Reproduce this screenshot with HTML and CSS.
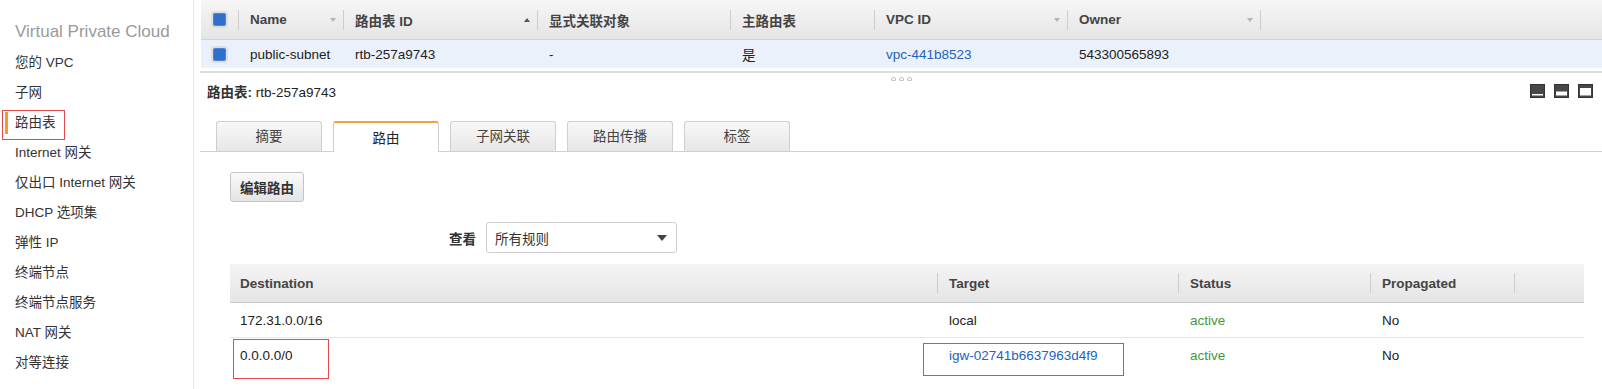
FILE: index.html
```html
<!DOCTYPE html>
<html>
<head>
  <meta http-equiv="content-type" content="text/html; charset=UTF-8">
  <title>路由表</title>
  <link rel="stylesheet" href="styles.css">
</head>
<body>
<div class="page">
    <aside class="side">
        <div class="side-title">Virtual Private Cloud</div>
        <ul class="nav">
            <li>您的 VPC</li>
            <li>子网</li>
            <li class="current">路由表</li>
            <li>Internet 网关</li>
            <li>仅出口 Internet 网关</li>
            <li>DHCP 选项集</li>
            <li>弹性 IP</li>
            <li>终端节点</li>
            <li>终端节点服务</li>
            <li>NAT 网关</li>
            <li>对等连接</li>
        </ul>
    </aside>

    <main class="main">
        <div class="list">
            <div class="list-head">
                <div class="cell sep"><span class="check"></span></div>
                <div class="cell sep sort">Name<i class="arrow"></i></div>
                <div class="cell sep sort">路由表 ID<i class="arrow up"></i></div>
                <div class="cell sep">显式关联对象</div>
                <div class="cell sep">主路由表</div>
                <div class="cell sep sort">VPC ID<i class="arrow"></i></div>
                <div class="cell sep sort">Owner<i class="arrow"></i></div>
                <div class="cell"></div>
            </div>
            <div class="list-row">
                <div class="cell"><span class="check"></span></div>
                <div class="cell">public-subnet</div>
                <div class="cell">rtb-257a9743</div>
                <div class="cell">-</div>
                <div class="cell">是</div>
                <div class="cell"><a class="link">vpc-441b8523</a></div>
                <div class="cell">543300565893</div>
                <div class="cell"></div>
            </div>
        </div>

        <div class="detail">
            <div class="grip"><i></i><i></i><i></i></div>
            <div class="detail-bar">
                <div class="detail-title"><b>路由表:</b> rtb-257a9743</div>
                <div class="layout-icons">
                    <svg width="15" height="14" viewBox="0 0 15 14"><rect x="0.5" y="0.5" width="14" height="13" fill="#474747" stroke="#333"/><rect x="2" y="10" width="11" height="1.5" fill="#fff"/></svg>
                    <svg width="15" height="14" viewBox="0 0 15 14"><rect x="0.5" y="0.5" width="14" height="13" fill="#474747" stroke="#333"/><rect x="2" y="7.5" width="11" height="4" fill="#fff"/></svg>
                    <svg width="15" height="14" viewBox="0 0 15 14"><rect x="0.5" y="0.5" width="14" height="13" fill="#474747" stroke="#333"/><rect x="2" y="4" width="11" height="7.5" fill="#fff"/></svg>
                </div>
            </div>

            <div class="tabs">
                <div class="tab">摘要</div>
                <div class="tab active">路由</div>
                <div class="tab">子网关联</div>
                <div class="tab">路由传播</div>
                <div class="tab">标签</div>
            </div>

            <div class="tab-body">
                <button class="btn">编辑路由</button>

                <div class="filter">
                    <label class="filter-label">查看</label>
                    <div class="select">所有规则<i class="caret"></i></div>
                </div>

                <div class="routes">
                    <div class="routes-head">
                        <div class="cell sep">Destination</div>
                        <div class="cell sep">Target</div>
                        <div class="cell sep">Status</div>
                        <div class="cell sep">Propagated</div>
                        <div class="cell"></div>
                    </div>
                    <div class="routes-row">
                        <div class="cell">172.31.0.0/16</div>
                        <div class="cell">local</div>
                        <div class="cell active-txt">active</div>
                        <div class="cell">No</div>
                        <div class="cell"></div>
                    </div>
                    <div class="routes-row">
                        <div class="cell mark mark-dest">0.0.0.0/0</div>
                        <div class="cell mark mark-target"><a class="link">igw-02741b6637963d4f9</a></div>
                        <div class="cell active-txt">active</div>
                        <div class="cell">No</div>
                        <div class="cell"></div>
                    </div>
                </div>
            </div>
        </div>
    </main>
</div>
</body>
</html>
```

FILE: styles.css
```css
* {
    margin: 0;
    padding: 0;
    box-sizing: border-box;
}
body {
    background-color: #FFF;
    font-family: 'Liberation Sans', 'Noto Sans CJK SC', sans-serif;
    font-size: 13.5px;
    color: #222;
}
.page {
    display: flex;
    height: 389px;
    overflow: hidden;
}

/* sidebar */
.side {
    width: 194px;
    flex: none;
    border-right: 1px solid #e8e8e8;
    padding-top: 21px;
}
.side-title {
    font-size: 17px;
    line-height: 22px;
    color: #9a9a9a;
    padding-left: 15px;
}
.nav {
    list-style: none;
    margin-top: 5px;
}
.nav li {
    height: 30px;
    line-height: 30px;
    padding-left: 15px;
    color: #333;
    position: relative;
}
.nav li.current::before {
    content: '';
    position: absolute;
    left: 5px;
    top: 4px;
    width: 3px;
    height: 22px;
    background: #f49b2b;
}
.nav li.current::after {
    content: '';
    position: absolute;
    left: 2px;
    top: 2px;
    width: 61px;
    height: 28px;
    border: 1px solid #e8474c;
}

/* main */
.main {
    flex: 1;
    margin-left: 6px;
    display: flex;
    flex-direction: column;
}
.cell {
    display: flex;
    align-items: center;
    min-width: 0;
    white-space: nowrap;
}
.sep {
    background: linear-gradient(#cdcdcd, #cdcdcd) right center / 1px 20px no-repeat;
}
.link {
    color: #2462c0;
    text-decoration: none;
}

/* top list */
.list {
    margin-left: 1px;
}
.list-head,
.list-row {
    display: grid;
    grid-template-columns: 38px 105px 194px 193px 144px 193px 193px 1fr;
}
.list-head {
    height: 40px;
    background: linear-gradient(#f6f6f6, #e5e5e5);
    border-bottom: 1px solid #d3d3d3;
    font-weight: bold;
    color: #444;
}
.list-head .cell,
.list-row .cell {
    padding: 0 8px 0 11px;
}
.list-head .cell:first-child,
.list-row .cell:first-child {
    padding-left: 10px;
}
.list-row {
    height: 28px;
    background: #eaf1fb;
}
.sort {
    justify-content: space-between;
}
.arrow {
    width: 0;
    height: 0;
    border-left: 3.5px solid transparent;
    border-right: 3.5px solid transparent;
    border-top: 4px solid #b4b4b4;
}
.arrow.up {
    border-top: none;
    border-bottom: 4px solid #555;
}
.check {
    display: block;
    width: 17px;
    height: 17px;
    border: 2px solid #dedede;
    border-radius: 4px;
    background: #2f6fce;
    box-shadow: inset 0 0 0 1px #4b83d6;
}

/* detail panel */
.detail {
    margin-top: 3px;
    border-top: 2px solid #dfdfdf;
}
.grip {
    height: 10px;
    display: flex;
    justify-content: center;
    gap: 3px;
    padding-top: 4px;
}
.grip i {
    width: 5px;
    height: 4px;
    border: 1px solid #c4c4c4;
    border-radius: 2px 2px 1px 1px;
}
.detail-bar {
    height: 16px;
    display: flex;
    align-items: center;
    justify-content: space-between;
    padding: 0 9px 0 7px;
}
.detail-title {
    color: #222;
}
.detail-title b {
    color: #333;
}
.layout-icons {
    display: flex;
    gap: 9px;
}
.layout-icons svg {
    display: block;
}

/* tabs */
.tabs {
    margin-top: 22px;
    display: flex;
    gap: 11px;
    padding-left: 16px;
    border-bottom: 1px solid #cfcfcf;
}
.tab {
    width: 106px;
    height: 30px;
    border: 1px solid #cfcfcf;
    border-bottom: none;
    border-radius: 3px 3px 0 0;
    background: linear-gradient(#f7f7f7, #e7e7e7);
    color: #444;
    text-align: center;
    line-height: 30px;
}
.tab.active {
    background: #FFF;
    border-top: 2px solid #f3a33a;
    color: #222;
    margin-bottom: -1px;
    height: 31px;
    line-height: 31px;
}

.tab-body {
    padding: 20px 18px 0 30px;
}
.btn {
    width: 74px;
    height: 30px;
    border: 1px solid #c4c4c4;
    border-radius: 3px;
    background: linear-gradient(#fafafa, #e4e4e4);
    font-family: inherit;
    font-size: 13.5px;
    font-weight: bold;
    color: #333;
    display: block;
}

.filter {
    margin-top: 20px;
    display: flex;
    align-items: center;
}
.filter-label {
    width: 246px;
    text-align: right;
    font-weight: bold;
    color: #333;
    margin-right: 10px;
}
.select {
    width: 191px;
    height: 31px;
    border: 1px solid #cdcdcd;
    border-radius: 3px;
    display: flex;
    align-items: center;
    justify-content: space-between;
    padding: 0 9px 0 8px;
    color: #333;
}
.caret {
    width: 0;
    height: 0;
    border-left: 5.5px solid transparent;
    border-right: 5.5px solid transparent;
    border-top: 6px solid #444;
}

/* routes table */
.routes {
    margin-top: 11px;
}
.routes-head,
.routes-row {
    display: grid;
    grid-template-columns: 708px 241px 192px 144px 69px;
}
.routes-head {
    height: 39px;
    background: linear-gradient(#f4f4f4, #e5e5e5);
    border-bottom: 1px solid #c9c9c9;
    font-weight: bold;
    color: #444;
}
.routes-row {
    height: 35px;
    border-bottom: 1px solid #e6e6e6;
}
.routes-row:last-child {
    border-bottom: none;
}
.routes-head .cell,
.routes-row .cell {
    padding-left: 11px;
}
.routes-head .cell:first-child,
.routes-row .cell:first-child {
    padding-left: 10px;
}
.active-txt {
    color: #3f9b37;
}
.mark {
    position: relative;
}
.mark::after {
    content: '';
    position: absolute;
    border: 1px solid #e8474c;
}
.mark-dest::after {
    left: 3px;
    top: 1px;
    width: 94px;
    height: 38px;
}
.mark-target::after {
    left: -15px;
    top: 5px;
    width: 199px;
    height: 31px;
}
```
